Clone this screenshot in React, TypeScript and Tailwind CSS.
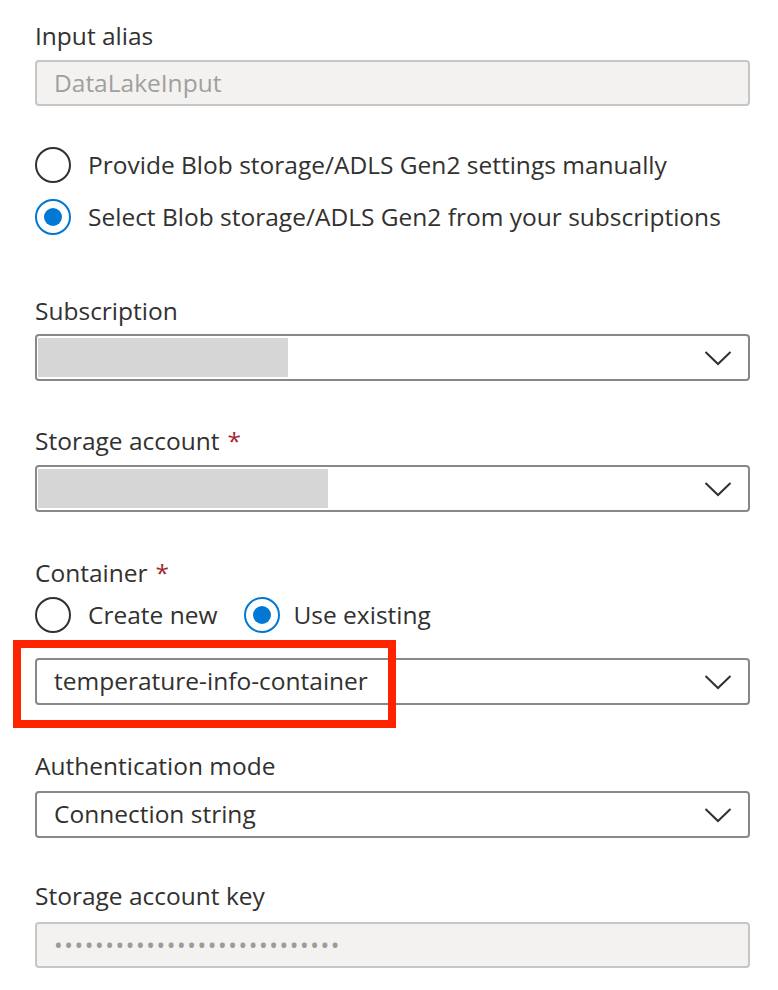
import React from 'react';

// Chevron used by the dropdowns
function Chevron() {
  return (
    <svg width="28" height="16" viewBox="0 0 28 16" fill="none" className="shrink-0">
      <path d="M1.5 2 L14 14 L26.5 2" stroke="#323130" strokeWidth="2" />
    </svg>
  );
}

function Radio({ checked }: { checked?: boolean }) {
  return checked ? (
    <span className="flex h-[36px] w-[36px] shrink-0 items-center justify-center rounded-full border-2 border-[#0078d4]">
      <span className="h-[18px] w-[18px] rounded-full bg-[#0078d4]" />
    </span>
  ) : (
    <span className="h-[36px] w-[36px] shrink-0 rounded-full border-2 border-[#323130]" />
  );
}

function Label({ text, required, className = '' }: { text: string; required?: boolean; className?: string }) {
  return (
    <div className={`h-[32px] leading-[32px] text-[#323130] ${className}`}>
      {text}
      {required && <span className="ml-[8px] text-[#a4262c]">*</span>}
    </div>
  );
}

function Select({ children, className = '' }: { children?: React.ReactNode; className?: string }) {
  return (
    <div
      className={`flex h-[47px] items-center justify-between rounded-[4px] border-2 border-[#8a8886] bg-white pr-[16px] text-[#323130] ${className}`}
    >
      <div className="flex h-full items-center">{children}</div>
      <Chevron />
    </div>
  );
}

export default function App() {
  return (
    <div
      className="min-h-[990px] w-[778px] bg-white pl-[35px] pr-[28px] pt-[20px] text-[24.5px]"
      style={{ fontFamily: '"Open Sans", "Noto Sans", sans-serif' }}
    >
      {/* Input alias */}
      <Label text="Input alias" />
      <div className="mt-[8px] flex h-[46px] items-center rounded-[4px] border-2 border-[#c8c6c4] bg-[#f3f2f1] px-[17px] text-[#a19f9d]">
        DataLakeInput
      </div>

      {/* Source choice */}
      <div className="mt-[41px] flex flex-col gap-[16px]">
        <label className="flex h-[36px] items-center gap-[17px] text-[#323130]">
          <Radio />
          Provide Blob storage/ADLS Gen2 settings manually
        </label>
        <label className="flex h-[36px] items-center gap-[17px] text-[#323130]">
          <Radio checked />
          Select Blob storage/ADLS Gen2 from your subscriptions
        </label>
      </div>

      {/* Subscription */}
      <Label text="Subscription" className="mt-[60px]" />
      <Select className="mt-[7px] pl-[1px]">
        <div className="h-[39px] w-[250px] bg-[#d6d6d6]" />
      </Select>

      {/* Storage account */}
      <Label text="Storage account" required className="mt-[44px]" />
      <Select className="mt-[8px] pl-[1px]">
        <div className="h-[39px] w-[290px] bg-[#d6d6d6]" />
      </Select>

      {/* Container */}
      <Label text="Container" required className="mt-[45px]" />
      <div className="mt-[8px] flex h-[36px] items-center text-[#323130]">
        <label className="flex items-center gap-[17px]">
          <Radio />
          Create new
        </label>
        <label className="ml-[27px] flex items-center gap-[13px]">
          <Radio checked />
          Use existing
        </label>
      </div>
      <div className="relative mt-[25px]">
        <Select className="pl-[17px]">temperature-info-container</Select>
        {/* highlight box */}
        <div className="pointer-events-none absolute left-[-22px] top-[-18px] h-[88px] w-[383px] border-[8px] border-[#ff2200]" />
      </div>

      {/* Authentication mode */}
      <Label text="Authentication mode" className="mt-[45px]" />
      <Select className="mt-[9px] h-[46px] pl-[17px]">Connection string</Select>

      {/* Storage account key */}
      <Label text="Storage account key" className="mt-[42px]" />
      <div className="mt-[10px] flex h-[46px] items-center rounded-[4px] border-2 border-[#c8c6c4] bg-[#f3f2f1] px-[17px] text-[23px] tracking-[1.6px] text-[#9d9b99]">
        ••••••••••••••••••••••••••••
      </div>
    </div>
  );
}
